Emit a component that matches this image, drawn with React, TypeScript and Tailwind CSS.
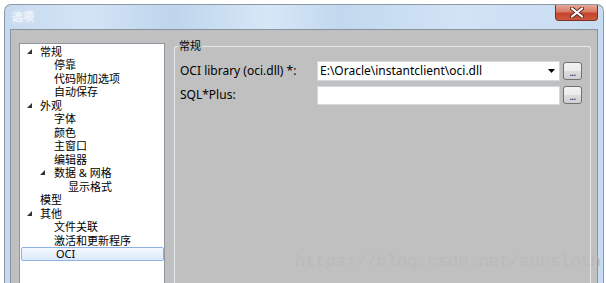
import React from "react";

type Item = { label: string; level: number; expanded?: boolean; selected?: boolean };

const items: Item[] = [
  { label: "常规", level: 0, expanded: true },
  { label: "停靠", level: 1 },
  { label: "代码附加选项", level: 1 },
  { label: "自动保存", level: 1 },
  { label: "外观", level: 0, expanded: true },
  { label: "字体", level: 1 },
  { label: "颜色", level: 1 },
  { label: "主窗口", level: 1 },
  { label: "编辑器", level: 1 },
  { label: "数据 & 网格", level: 1, expanded: true },
  { label: "显示格式", level: 2 },
  { label: "模型", level: 0 },
  { label: "其他", level: 0, expanded: true },
  { label: "文件关联", level: 1 },
  { label: "激活和更新程序", level: 1 },
  { label: "OCI", level: 1, selected: true },
];

const padFor = (level: number) => (level === 0 ? "pl-[20px]" : level === 1 ? "pl-[34px]" : "pl-[48px]");
const triFor = (level: number) => (level === 0 ? "left-[7px]" : "left-[20px]");

function Tri() {
  return (
    <svg width="5" height="5" viewBox="0 0 5 5" className="block">
      <polygon points="5,0 5,5 0,5" fill="#333" />
    </svg>
  );
}

function DotsButton() {
  return (
    <div className="ml-[3px] w-[19px] h-[18px] rounded-[3px] border border-[#707070] bg-[linear-gradient(180deg,#f3f3f3_0%,#ebebeb_50%,#dddddd_51%,#cfcfcf_100%)] flex items-end justify-center pb-[3px]">
      <span className="text-[9px] leading-[6px] text-[#2a4f82] font-bold tracking-[-0.5px]">...</span>
    </div>
  );
}

export default function App() {
  return (
    <div
      className="relative w-[606px] h-[283px] overflow-hidden bg-white"
      style={{ fontFamily: '"Noto Sans", "Noto Sans CJK SC", sans-serif' }}
    >
      <div className="ml-[4px] mt-[4px] w-[600px] h-[279px] rounded-t-[7px] border border-b-0 border-[#8c99a8] bg-[linear-gradient(90deg,#c6daef_0%,#d3e4f5_14%,#bfd5ec_28%,#d6e7f7_44%,#c3d8ee_56%,#d1e3f5_76%,#c8dcf1_100%)] flex flex-col">
        {/* title bar */}
        <div className="h-[24px] flex items-start justify-between pl-[7px] pr-[5px]">
          <span className="mt-[6px] text-[11px] leading-[12px] text-[#f3f7fc] [text-shadow:0_0_4px_rgba(255,255,255,0.9)]">选项</span>
          <div className="w-[43px] h-[16px] rounded-b-[4px] border border-t-0 border-[#7a3226] bg-[linear-gradient(180deg,#e9a796_0%,#d77b65_45%,#c7432b_55%,#cc5a3e_100%)] flex items-center justify-center">
            <svg width="14" height="11" viewBox="0 0 14 11">
              <path d="M2 1.5 L12 9.5 M12 1.5 L2 9.5" stroke="#5a2a22" strokeWidth="4" strokeLinecap="round" />
              <path d="M2 1.5 L12 9.5 M12 1.5 L2 9.5" stroke="#ffffff" strokeWidth="2.2" strokeLinecap="round" />
            </svg>
          </div>
        </div>
        {/* client area */}
        <div className="mx-[5px] flex-1 border border-b-0 border-[#8693a1] bg-[#c0c0c0] flex pl-[8px] pt-[13px]">
          {/* tree panel */}
          <div className="w-[146px] self-stretch border border-b-0 border-[#8e969f] bg-white pt-[0.5px]">
            {items.map((it) => (
              <div
                key={it.label}
                className={
                  "relative h-[13.5px] flex items-center text-[11px] leading-[13px] text-black " +
                  padFor(it.level) +
                  (it.selected
                    ? " ml-[1px] mr-[0px] rounded-[2px] border border-[#8db2e3] bg-[linear-gradient(180deg,#f4f8fe_0%,#dbe9fb_100%)] pl-[32px]"
                    : "")
                }
              >
                {it.expanded && (
                  <span className={"absolute top-[4px] " + triFor(it.level)}>
                    <Tri />
                  </span>
                )}
                <span className="whitespace-pre">{it.label}</span>
              </div>
            ))}
          </div>
          {/* group box */}
          <div className="relative ml-[9px] mt-[3px] w-[417px] self-stretch rounded-t-[3px] border border-b-0 border-[#e4e9ee] pl-[5px] pt-[14px]">
            <span className="absolute left-[3px] top-[-8px] bg-[#c0c0c0] px-[1px] text-[11px] leading-[14px] text-black">常规</span>
            <div className="flex items-center h-[20px]">
              <span className="w-[137px] text-[12px] text-black whitespace-nowrap">OCI library (oci.dll) *:</span>
              <div className="w-[243px] h-[20px] border border-[#d3d8de] bg-white flex items-center pl-[2px] pr-[4px]">
                <span className="flex-1 text-[12px] text-black whitespace-nowrap">E:\Oracle\instantclient\oci.dll</span>
                <svg width="7" height="4" viewBox="0 0 7 4">
                  <polygon points="0,0 7,0 3.5,4" fill="#000" />
                </svg>
              </div>
              <DotsButton />
            </div>
            <div className="flex items-center h-[20px] mt-[4px]">
              <span className="w-[137px] text-[12px] text-black whitespace-nowrap">SQL*Plus:</span>
              <div className="w-[243px] h-[19px] border border-[#d3d8de] bg-white" />
              <DotsButton />
            </div>
          </div>
        </div>
      </div>
      <span
        className="absolute left-[295px] top-[252px] text-[17px] leading-[20px] text-[#bababa] whitespace-nowrap"
        style={{ fontFamily: '"Liberation Mono", monospace' }}
      >
        https://blog.csdn.net/sunsloth
      </span>
    </div>
  );
}
